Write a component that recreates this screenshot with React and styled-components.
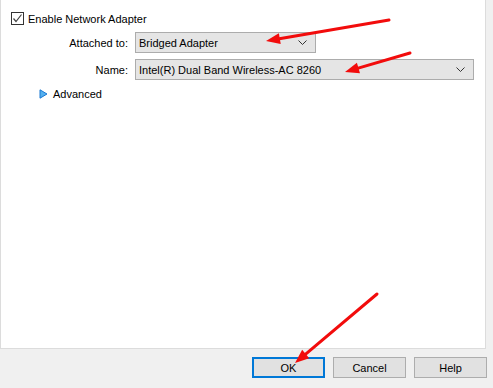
import React from 'react';
import styled, { createGlobalStyle } from 'styled-components';

const GlobalStyle = createGlobalStyle`
    html, body {
        margin: 0;
        padding: 0;
        background: #f0f0f0;
    }
    body {
        font-family: "Liberation Sans", Arial, sans-serif;
        font-size: 11px;
        color: #000;
    }
`;

const Arrow = ({ x1, y1, x2, y2 }) => {
    // arrowhead at (x2, y2)
    const len = 14;
    const half = 5.5;
    const dx = x2 - x1;
    const dy = y2 - y1;
    const d = Math.hypot(dx, dy);
    const ux = dx / d;
    const uy = dy / d;
    const bx = x2 - ux * len;
    const by = y2 - uy * len;
    const pts = [
        [x2, y2],
        [bx - uy * half, by + ux * half],
        [bx + uy * half, by - ux * half],
    ].map(p => p.join(',')).join(' ');
    return (
        <g>
            <line x1={x1} y1={y1} x2={bx + ux * 2} y2={by + uy * 2} stroke="#f20c0c" strokeWidth="3" strokeLinecap="round" />
            <polygon points={pts} fill="#f20c0c" />
        </g>
    );
};

const Chevron = () => (
    <svg width="9" height="5" viewBox="0 0 9 5">
        <polyline points="0.5,0.5 4.5,4.5 8.5,0.5" fill="none" stroke="#333" strokeWidth="1" />
    </svg>
);

const App = () => {
    return (
        <>
            <GlobalStyle />
            <Dialog>
                <Panel>
                    <CheckRow>
                        <CheckBox>
                            <svg width="11" height="11" viewBox="0 0 11 11">
                                <polyline points="1.5,5.5 4,8.5 9.5,1.5" fill="none" stroke="#444" strokeWidth="1.2" />
                            </svg>
                        </CheckBox>
                        <span>Enable Network Adapter</span>
                    </CheckRow>

                    <Form>
                        <Label>Attached to:</Label>
                        <Combo $width={181}>
                            <span>Bridged Adapter</span>
                            <Chevron />
                        </Combo>
                        <Label>Name:</Label>
                        <Combo $width={339}>
                            <span>Intel(R) Dual Band Wireless-AC 8260</span>
                            <Chevron />
                        </Combo>
                    </Form>

                    <AdvancedRow>
                        <svg width="9" height="10" viewBox="0 0 9 10">
                            <polygon points="1,0.8 8,5 1,9.2" fill="#55b0ee" stroke="#1a78d2" strokeWidth="1" strokeLinejoin="round" />
                        </svg>
                        <span>Advanced</span>
                    </AdvancedRow>
                </Panel>

                <ButtonBar>
                    <Button $default>OK</Button>
                    <Button>Cancel</Button>
                    <Button>Help</Button>
                </ButtonBar>

                <Overlay width="493" height="388" viewBox="0 0 493 388">
                    <Arrow x1={389} y1={20} x2={266} y2={41} />
                    <Arrow x1={410} y1={53} x2={345} y2={72} />
                    <Arrow x1={377} y1={294} x2={295} y2={363} />
                </Overlay>
            </Dialog>
        </>
    );
};

const Dialog = styled.div`
    position: relative;
    width: 493px;
    height: 388px;
    background: #f0f0f0;
    overflow: hidden;
`;

const Panel = styled.div`
    box-sizing: border-box;
    width: 486px;
    height: 349px;
    background: #fff;
    border-left: 1px solid #dcdcdc;
    border-right: 1px solid #dcdcdc;
    border-bottom: 1px solid #dcdcdc;
    padding: 12px 0 0 10px;
`;

const CheckRow = styled.div`
    display: flex;
    align-items: center;
    gap: 4px;
    height: 13px;
`;

const CheckBox = styled.div`
    box-sizing: border-box;
    width: 13px;
    height: 13px;
    border: 1px solid #333;
    background: #fff;
    display: flex;
    align-items: center;
    justify-content: center;
`;

const Form = styled.div`
    display: grid;
    grid-template-columns: 117px auto;
    column-gap: 7px;
    row-gap: 6px;
    margin-top: 7px;
    align-items: center;
    justify-items: start;
`;

const Label = styled.div`
    justify-self: end;
`;

const Combo = styled.div`
    box-sizing: border-box;
    width: ${p => p.$width}px;
    height: 21px;
    background: #e5e5e5;
    border: 1px solid #acacac;
    display: flex;
    align-items: center;
    justify-content: space-between;
    padding: 0 8px 0 3px;
`;

const AdvancedRow = styled.div`
    display: flex;
    align-items: center;
    gap: 5px;
    margin: 8px 0 0 28px;
`;

const ButtonBar = styled.div`
    display: flex;
    justify-content: flex-end;
    gap: 8px;
    width: 487px;
    margin-top: 8px;
`;

const Button = styled.button`
    box-sizing: border-box;
    width: 73px;
    height: 21px;
    padding: 0;
    font-family: inherit;
    font-size: 11px;
    color: #000;
    background: #e1e1e1;
    border: ${p => (p.$default ? '2px solid #0078d7' : '1px solid #adadad')};
`;

const Overlay = styled.svg`
    position: absolute;
    left: 0;
    top: 0;
    pointer-events: none;
`;

export default App;
